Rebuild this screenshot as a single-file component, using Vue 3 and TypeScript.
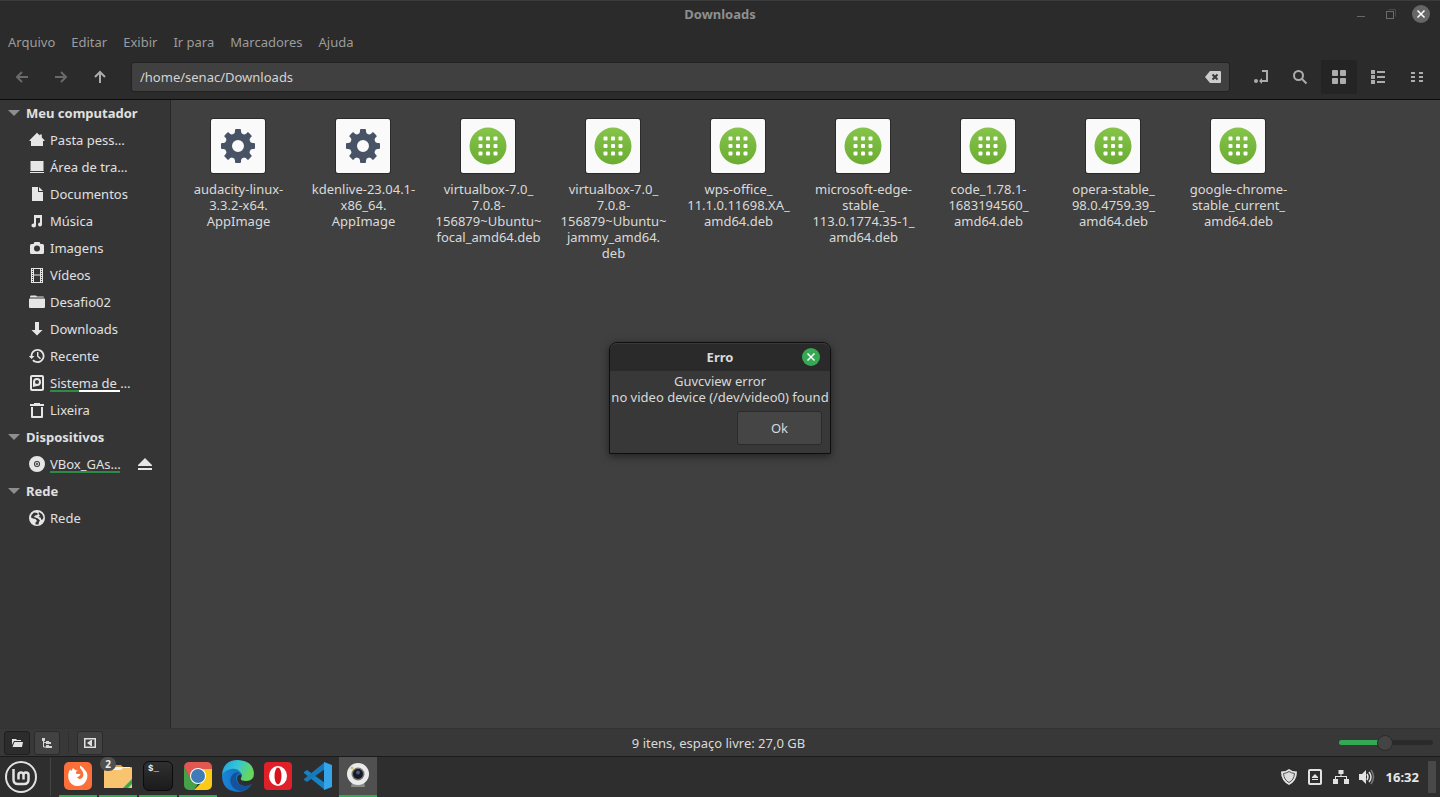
<script setup lang="ts">
import { computed, ref } from 'vue'

interface Place {
  label: string
  icon: string
  usage?: number
  eject?: boolean
}
interface Group {
  title: string
  places: Place[]
}
interface FileItem {
  kind: 'app' | 'deb'
  lines: string[]
}

const menus: string[] = ['Arquivo', 'Editar', 'Exibir', 'Ir para', 'Marcadores', 'Ajuda']

const icons: Record<string, string> = {
  home: 'M8 .8L10.8 3.6V2.6h2v3L15.5 8.2V9H14v5H2V9H.5V8.2Z',
  desktop: 'M1.5 2h13v10h-13ZM1 13h14v1H1Z',
  document: 'M3 1h6v5h5v9H3ZM10 1l4 4h-4Z',
  music: 'M5 2h8v9.500a2 2 0 1 1-2-2V5H7v7.500a2.300 2 0 1 1-2-2Z',
  camera: 'M5.500 2h5l1 2H13.500q1.500 0 1.500 1.500v7q0 1.500-1.500 1.500h-11Q1 14 1 12.500v-7Q1 4 2.500 4h2ZM8 5.500a3 3 0 1 0 0 6a3 3 0 1 0 0-6Z',
  film: 'M2 1h12v15H2ZM5 2v5.500h6V2ZM5 8.500V15h6V8.500ZM3 2v1h1V2ZM3 4v1h1V4ZM3 6v1h1V6ZM3 8v1h1V8ZM3 10v1h1v-1ZM3 12v1h1v-1ZM3 14v1h1v-1ZM12 2v1h1V2ZM12 4v1h1V4ZM12 6v1h1V6ZM12 8v1h1V8ZM12 10v1h1v-1ZM12 12v1h1v-1ZM12 14v1h1v-1Z',
  folder: 'M2 1.500h5l1 1h6q1 0 1 1H1q0-2 1-2ZM1 4.500h14.500q.500 0 .500.500v8q0 1-1 1H1q-1 0-1-1V5.500q0-1 1-1Z',
  download: 'M6 1h4v8h3.500L8 14.500L2.500 9H6Z',
  recent: 'M8.500 1a7 7 0 1 1-5.200 11.700l1.300-1.200a5.200 5.200 0 1 0-1.300-3.500H5.500L2.500 11L-.300 8H1.500A7 7 0 0 1 8.500 1ZM8 4h1.400v3.800l2.600 2.400l-1 1L8 8.500Z',
  disk: 'M3 0h10q2 0 2 2v12q0 2-2 2H3q-2 0-2-2V2Q1 0 3 0ZM3 2v12h10V2ZM8 3a4 4 0 1 1 0 8L4 12V7a4 4 0 0 1 4-4ZM8 5a2 2 0 1 0 0 4a2 2 0 1 0 0-4Z',
  trash: 'M5 1h6v1h4v2H1V2h4ZM2 5h2v9h8V5h2v10q0 1-1 1H3q-1 0-1-1Z',
  disc: 'M8 0a8 8 0 1 1 0 16A8 8 0 1 1 8 0ZM8 5a3 3 0 1 0 0 6a3 3 0 1 0 0-6ZM8 6a2 2 0 1 1 0 4a2 2 0 1 1 0-4ZM8 7a1 1 0 1 0 0 2a1 1 0 1 0 0-2Z',
  globe: 'M8 0a8 8 0 1 1 0 16A8 8 0 1 1 8 0ZM5 2.500L2.500 5L2 7.500l2 1l2.500.500l1.500 2l-1.500 1.500v2l3 .100l.500-2.600l1-1.500L9 8.500L6.500 7.500L5 7l1-1.500L8.500 5V3ZM10 2l-.500 2l1.500 1.500L9.500 7l2 .500l1 2.500l1.500-1L14.500 7L13 4Z',
}

const groups: Group[] = [
  {
    title: 'Meu computador',
    places: [
      { label: 'Pasta pess…', icon: 'home' },
      { label: 'Área de tra…', icon: 'desktop' },
      { label: 'Documentos', icon: 'document' },
      { label: 'Música', icon: 'music' },
      { label: 'Imagens', icon: 'camera' },
      { label: 'Vídeos', icon: 'film' },
      { label: 'Desafio02', icon: 'folder' },
      { label: 'Downloads', icon: 'download' },
      { label: 'Recente', icon: 'recent' },
      { label: 'Sistema de …', icon: 'disk', usage: 41 },
      { label: 'Lixeira', icon: 'trash' },
    ],
  },
  { title: 'Dispositivos', places: [{ label: 'VBox_GAs…', icon: 'disc', usage: 100, eject: true }] },
  { title: 'Rede', places: [{ label: 'Rede', icon: 'globe' }] },
]

const files: FileItem[] = [
  { kind: 'app', lines: ['audacity-linux-', '3.3.2-x64.', 'AppImage'] },
  { kind: 'app', lines: ['kdenlive-23.04.1-', 'x86_64.', 'AppImage'] },
  { kind: 'deb', lines: ['virtualbox-7.0_', '7.0.8-', '156879~Ubuntu~', 'focal_amd64.deb'] },
  { kind: 'deb', lines: ['virtualbox-7.0_', '7.0.8-', '156879~Ubuntu~', 'jammy_amd64.', 'deb'] },
  { kind: 'deb', lines: ['wps-office_', '11.1.0.11698.XA_', 'amd64.deb'] },
  { kind: 'deb', lines: ['microsoft-edge-', 'stable_', '113.0.1774.35-1_', 'amd64.deb'] },
  { kind: 'deb', lines: ['code_1.78.1-', '1683194560_', 'amd64.deb'] },
  { kind: 'deb', lines: ['opera-stable_', '98.0.4759.39_', 'amd64.deb'] },
  { kind: 'deb', lines: ['google-chrome-', 'stable_current_', 'amd64.deb'] },
]

const dots: number[] = [-7.5, 0, 7.5]
const teeth: number[] = [0, 45, 90, 135, 180, 225, 270, 315]
const path = ref('/home/senac/Downloads')
const zoom = ref(49)
const zoomFill = computed(() => ({ '--fill': zoom.value + '%' }))
const dialogOpen = ref(true)
</script>

<template>
  <div class="screen">
    <header class="titlebar">
      <h1>Downloads</h1>
      <div class="window-controls">
        <button aria-label="Minimizar"><svg width="18" height="18"><path d="M5 11.5h8" stroke="#686868" /></svg></button>
        <button aria-label="Restaurar"><svg width="18" height="18" fill="none"><path d="M6.500 4.500h7v7" stroke="#484848" /><rect x="4.500" y="6.500" width="7" height="7" stroke="#6a6a6a" /></svg></button>
        <button aria-label="Fechar"><svg width="18" height="18"><circle cx="9" cy="9" r="9" fill="#666" /><path d="M5.500 5.500l7 7m0-7l-7 7" stroke="#fff" stroke-width="1.500" /></svg></button>
      </div>
    </header>

    <nav class="menubar">
      <button v-for="m in menus" :key="m">{{ m }}</button>
    </nav>

    <div class="toolbar">
      <div class="tools">
        <button class="tool dim" aria-label="Voltar"><svg viewBox="0 0 16 16"><path d="M14 8H3M8 3L3 8l5 5" /></svg></button>
        <button class="tool dim" aria-label="Avançar"><svg viewBox="0 0 16 16"><path d="M2 8h11M8 3l5 5l-5 5" /></svg></button>
        <button class="tool" aria-label="Acima"><svg viewBox="0 0 16 16"><path d="M8 14V3M3 8l5-5l5 5" /></svg></button>
      </div>
      <div class="location">
        <input v-model="path" type="text" aria-label="Local" />
        <button aria-label="Limpar" @click="path = ''">
          <svg width="16" height="16" viewBox="0 0 16 16"><path d="M5 2h10q1 0 1 1v10q0 1-1 1H5L0 8Z" fill="#ccc" /><path d="M7.500 5.500l5 5m0-5l-5 5" stroke="#3a3a3a" stroke-width="2" /></svg>
        </button>
      </div>
      <div class="tools">
        <button class="tool" aria-label="Alternar local"><svg viewBox="0 0 16 16"><path d="M9 2h5v10H8" /><path d="M6 12l3-3v6Z" class="solid" /><circle cx="3" cy="12" r="2" class="solid" /></svg></button>
        <button class="tool" aria-label="Pesquisar"><svg viewBox="0 0 16 16"><circle cx="6.500" cy="6.500" r="4.500" /><path d="M10 10l4.500 4.500" /></svg></button>
        <button class="tool active" aria-label="Ícones"><svg viewBox="0 0 16 16"><g class="solid"><rect x="1" y="1" width="6" height="6" rx="1" /><rect x="9" y="1" width="6" height="6" rx="1" /><rect x="1" y="9" width="6" height="6" rx="1" /><rect x="9" y="9" width="6" height="6" rx="1" /></g></svg></button>
        <button class="tool" aria-label="Lista"><svg viewBox="0 0 16 16"><path class="solid" d="M1 1h4v4H1ZM1 6h4v4H1ZM1 11h4v4H1ZM7 2h8v2H7ZM7 7h8v2H7ZM7 12h8v2H7Z" /></svg></button>
        <button class="tool" aria-label="Compacto"><svg viewBox="0 0 16 16"><path class="solid" d="M2 3h4v2H2ZM2 7h4v2H2ZM2 11h4v2H2ZM10 3h4v2h-4ZM10 7h4v2h-4ZM10 11h4v2h-4Z" /></svg></button>
      </div>
    </div>

    <main class="content">
      <aside class="sidebar">
        <section v-for="g in groups" :key="g.title">
          <h2><svg width="12" height="6"><path d="M0 0h12L6 6Z" fill="#8e8e8e" /></svg>{{ g.title }}</h2>
          <div v-for="p in g.places" :key="p.label" class="place">
            <a href="#" @click.prevent>
              <svg width="16" height="16" viewBox="0 0 16 16"><path :d="icons[p.icon]" fill="#e6e6e6" fill-rule="evenodd" /></svg>
              <span>{{ p.label }}<i v-if="p.usage" class="usage"><b :style="{ width: p.usage + '%' }"></b></i></span>
            </a>
            <button v-if="p.eject" aria-label="Ejetar"><svg width="16" height="16"><path d="M8 2l7 7v1H1V9ZM1 12h14v2H1Z" fill="#e6e6e6" /></svg></button>
          </div>
        </section>
      </aside>

      <ul class="files">
        <li v-for="f in files" :key="f.lines.join('')">
          <svg class="thumb" viewBox="0 0 56 56">
            <rect x="0" y="0" width="56" height="56" rx="3" fill="#2b2b2b" />
            <rect x="1" y="1" width="54" height="54" rx="2" fill="#fafafa" />
            <g v-if="f.kind === 'app'" fill="#485366">
              <path v-for="a in teeth" :key="a" d="M23.500 18L25 13.500V12q0-1 1-1h4q1 0 1 1v1.500L32.500 18Z" :transform="`rotate(${a} 28 28)`" />
              <circle cx="28" cy="28" r="9.500" fill="none" stroke="#485366" stroke-width="7" />
            </g>
            <g v-else>
              <defs><linearGradient id="leaf" x2="0" y2="1"><stop stop-color="#86c44a" /><stop offset="1" stop-color="#6aac31" /></linearGradient></defs>
              <circle cx="28" cy="28" r="18.500" fill="url(#leaf)" />
              <template v-for="y in dots" :key="y">
                <rect v-for="x in dots" :key="x" :x="26 + x" :y="26 + y" width="4" height="4" rx="1" fill="#fff" />
              </template>
            </g>
          </svg>
          <p><span v-for="line in f.lines" :key="line">{{ line }}</span></p>
        </li>
      </ul>
    </main>

    <footer class="statusbar">
      <div class="pane-buttons">
        <button class="pressed" aria-label="Locais"><svg width="12" height="12"><path d="M1 2h4l1 1h4v1H3L1 8ZM3.500 5H12l-1 5H1.500Z" fill="#e4e4e4" /></svg></button>
        <button aria-label="Árvore"><svg width="12" height="12"><path d="M2.500 2v8H5M2.500 5.500H5" fill="none" stroke="#d4d4d4" /><path d="M1 1h3v3H1ZM5 4h3v1h2v2H5ZM5 8h3v1h3v2H5Z" fill="#d4d4d4" /></svg></button>
        <span class="rule"></span>
        <button aria-label="Ocultar painel"><svg width="12" height="12"><path d="M0 1h12v10H0ZM1.500 2.500v7h9v-7ZM7 3v6L3 6ZM7 3h1v6H7Z" fill="#e0e0e0" fill-rule="evenodd" /></svg></button>
      </div>
      <p>9 itens, espaço livre: 27,0 GB</p>
      <div class="zoom"><input v-model="zoom" type="range" min="0" max="100" aria-label="Zoom" :style="zoomFill" /></div>
    </footer>

    <footer class="panel">
      <button class="start" aria-label="Menu">
        <svg width="34" height="34" viewBox="0 0 34 34" fill="none" stroke="#e2e2e2"><circle cx="17" cy="17" r="15" stroke-width="2" /><path d="M9.500 9v10.500q0 4.500 4.500 4.500h6q4.500 0 4.500-4.500V15q0-2.500-2.500-2.500T19.500 15v4.500M19.500 15q0-2.500-2.500-2.500T14.500 15v4.500" stroke-width="2.500" /></svg>
      </button>
      <span class="divider"></span>
      <div class="tasks">
        <button class="task running" aria-label="Firefox">
          <svg viewBox="0 0 32 32"><rect x="2" y="2" width="28" height="28" rx="5" fill="#fd6f39" /><path d="M8 9.500L9.500 11l1.500-3l3 2.500l2-.500q-3 2-1.500 4h4q-1 3-3.500 3q2 3.500 5 1q2-2 1-5.500q-1-3-3-4.500V5.500q3 1.500 4.500 4q4 4 2.500 9A9.500 9.500 0 0 1 6.500 19Q5.500 13 8 9.500Z" fill="#fff" /></svg>
        </button>
        <button class="task running" aria-label="Arquivos">
          <svg viewBox="0 0 32 32"><path d="M2 5h17l2 2h9v6H2Z" fill="#d89b4b" /><path d="M3 7h25v5H3Z" fill="#f2f2f2" /><path d="M2 10h17l2-2h9v20H2Z" fill="#f9c470" /><path d="M21 28l9-9v5l-4 4Z" fill="#35a854" /></svg>
          <span class="badge">2</span>
        </button>
        <button class="task running" aria-label="Terminal">
          <span class="terminal">$<i>_</i></span>
        </button>
        <button class="task running" aria-label="Chrome">
          <svg viewBox="0 0 32 32"><defs><clipPath id="tile"><rect x="2" y="2" width="28" height="28" rx="5" /></clipPath></defs><g clip-path="url(#tile)"><path d="M2 2h28v7H16l-7 11L2 7Z" fill="#e2574f" /><path d="M2 7l7 12l7 5l-4 6H2Z" fill="#45a048" /><path d="M16 9h14v21H12l10-10Z" fill="#fbc917" /></g><circle cx="16" cy="16" r="8" fill="#fff" /><circle cx="16" cy="16" r="7" fill="#3e7bb8" /></svg>
        </button>
        <button class="task" aria-label="Edge">
          <svg viewBox="0 0 32 32"><defs><linearGradient id="sea" x2="1" y2=".3"><stop stop-color="#219fe0" /><stop offset=".5" stop-color="#35c5d6" /><stop offset="1" stop-color="#67d85a" /></linearGradient><linearGradient id="deep" x2="1"><stop stop-color="#1a86d9" /><stop offset="1" stop-color="#135fae" /></linearGradient></defs><path d="M0 15Q3 8 11 8q8 0 8 7q-3-1-4 3q0 7 8 8q4 0 7-2q-5 8-14 8Q0 31 0 15Z" fill="url(#deep)" /><path d="M11 14q-5 6-1 12q4 5 10 5q7-2 10-7q-5 3-10 1.500q-7-3-6-9q1-3 4-3.500q-3-2-7 1Z" fill="#14529c" /><path d="M0 15Q1 0 16 0q15 1 16 13q0 8-8 8q-6 0-5-3q2-3-1-6q-3-4-9-3q-6 1-9 6Z" fill="url(#sea)" /></svg>
        </button>
        <button class="task" aria-label="Opera">
          <svg viewBox="0 0 32 32"><rect x="2" y="2" width="28" height="28" rx="4" fill="#df2028" /><ellipse cx="16" cy="16" rx="9" ry="10" fill="#fff" /><ellipse cx="16" cy="16" rx="3.500" ry="8.500" fill="#d7141e" /></svg>
        </button>
        <button class="task" aria-label="Code">
          <svg viewBox="0 0 32 32"><path d="M2 12l3-2l18 13v7L2 13Z" fill="#1683c6" /><path d="M2 20l3 2L23 9V2L2 19Z" fill="#1878b8" /><path d="M22 2l8 3v22l-8 3Z" fill="#34a4eb" /></svg>
        </button>
        <button class="task running current" aria-label="Guvcview">
          <svg viewBox="0 0 32 32"><ellipse cx="16" cy="27" rx="10" ry="3" fill="#51514d" /><path d="M10 22h12l1 5H9Z" fill="#8a8a86" /><circle cx="16" cy="14" r="11" fill="#ecebec" /><circle cx="16" cy="14" r="6.500" fill="#77777a" /><circle cx="16" cy="14" r="5" fill="#181b23" /><circle cx="16" cy="12.500" r="2" fill="#485b85" /><circle cx="10" cy="8" r="1" fill="#f4ed62" stroke="#c8c23b" /></svg>
        </button>
      </div>
      <div class="tray">
        <button aria-label="Atualizações"><svg width="16" height="16"><path d="M8 0q3 2.500 8 2.500Q16 12 8 16Q0 12 0 2.500Q5 2.500 8 0Z" fill="#e2e2e2" /><path d="M8 2.500q2 1.500 5.500 2Q13 11 8 13.500Q3 11 2.500 4.500Q6 4 8 2.500Z" fill="#ddd" stroke="#555" /></svg></button>
        <button aria-label="Unidades"><svg width="16" height="16"><path d="M3 0h10q2 0 2 2v12q0 2-2 2H3q-2 0-2-2V2Q1 0 3 0ZM3 2v12h10V2ZM8 5l3 3v1H5V8ZM5 10h6v1H5Z" fill="#e2e2e2" fill-rule="evenodd" /></svg></button>
        <button aria-label="Rede"><svg width="16" height="16"><path d="M5.500 1h5v4h-2v2H14v3h2v5h-5v-5h2V8H3v2h2v5H0v-5h2V7h5.500V5h-2Z" fill="#e2e2e2" /></svg></button>
        <button aria-label="Volume"><svg width="16" height="16" fill="none" stroke="#e2e2e2" stroke-width="1.500"><path d="M0 5h3l4-4v14l-4-4H0Z" fill="#e2e2e2" stroke="none" /><path d="M8 5q2 3 0 6M10 3q4 5 0 10" /><path d="M12 1q5 7 0 14" stroke="#777" /></svg></button>
      </div>
      <time>16:32</time>
      <button class="peek" aria-label="Mostrar área de trabalho"></button>
    </footer>

    <div v-if="dialogOpen" class="overlay">
      <section class="dialog" role="alertdialog" aria-labelledby="error-title">
        <header>
          <h2 id="error-title">Erro</h2>
          <button aria-label="Fechar erro" @click="dialogOpen = false"><svg width="18" height="18"><circle cx="9" cy="9" r="9" fill="#35a854" /><path d="M5.500 5.500l7 7m0-7l-7 7" stroke="#fff" stroke-width="1.500" /></svg></button>
        </header>
        <p>Guvcview error<br />no video device (/dev/video0) found</p>
        <button class="ok" @click="dialogOpen = false">Ok</button>
      </section>
    </div>
  </div>
</template>

<style>
body {
  margin: 0;
  background: #2e2e2e;
}
</style>

<style scoped>
.screen {
  position: relative;
  display: flex;
  flex-direction: column;
  min-height: 100vh;
  box-sizing: border-box;
  border-top: 1px solid #3b3b3b;
  background: #2b2b2b;
  color: #dadada;
  font: 13px/16px "Noto Sans", "Open Sans", sans-serif;
}
.screen * {
  box-sizing: border-box;
}
button {
  padding: 0;
  border: 0;
  background: none;
  color: inherit;
  font: inherit;
}
svg {
  display: block;
}
h1,
h2,
p,
ul {
  margin: 0;
  padding: 0;
  font-size: 13px;
}
.titlebar {
  display: grid;
  grid-template-columns: 1fr auto 1fr;
  align-items: center;
  height: 27px;
  padding: 0 10px 2px;
}
.titlebar h1 {
  grid-column: 2;
  color: #8f8f8f;
}
.window-controls {
  display: flex;
  justify-content: flex-end;
  gap: 12px;
}
.menubar {
  display: flex;
  align-items: center;
  gap: 16px;
  height: 28px;
  padding: 0 8px;
  color: #9c9c9c;
}
.toolbar {
  display: flex;
  align-items: center;
  gap: 13px;
  height: 44px;
  padding: 0 5px 2px 4px;
  border-bottom: 1px solid #0c0c0c;
}
.tools {
  display: flex;
  gap: 3px;
}
.tool {
  display: grid;
  place-items: center;
  width: 36px;
  height: 34px;
  border-radius: 3px;
  color: #acacac;
}
.tool.dim {
  color: #6a6a6a;
}
.tool.active {
  background: #242424;
}
.tool svg {
  width: 16px;
  height: 16px;
  fill: none;
  stroke: currentColor;
  stroke-width: 2;
}
.tool .solid {
  fill: currentColor;
  stroke: none;
}
.location {
  display: flex;
  flex: 1;
  align-items: center;
  height: 30px;
  padding-right: 8px;
  border: 1px solid #222;
  border-radius: 3px;
  background: #404040;
}
.location input {
  flex: 1;
  min-width: 0;
  padding: 0 8px;
  border: 0;
  outline: 0;
  background: none;
  color: #d4d4d4;
  font: inherit;
}
.content {
  display: flex;
  flex: 1;
  background: #404040;
}
.sidebar {
  width: 171px;
  border-right: 1px solid #272727;
  background: #353535;
  color: #e0e0e0;
}
.sidebar h2 {
  display: flex;
  align-items: center;
  gap: 6px;
  height: 27px;
  padding: 0 0 2px 8px;
}
.place {
  display: flex;
  align-items: center;
  height: 27px;
  padding: 0 0 2px 29px;
}
.place a {
  display: flex;
  align-items: center;
  gap: 5px;
  width: 108px;
  color: inherit;
  text-decoration: none;
  white-space: nowrap;
}
.place span {
  position: relative;
}
.usage {
  position: absolute;
  left: 0;
  bottom: -1px;
  width: 70px;
  height: 2px;
  background: #fff;
}
.usage b {
  display: block;
  height: 2px;
  background: #2d8a47;
}
.files {
  display: flex;
  flex: 1;
  flex-wrap: wrap;
  align-content: flex-start;
  padding: 18px 5px;
  list-style: none;
}
.files li {
  width: 125px;
}
.thumb {
  width: 56px;
  height: 56px;
  margin: 0 34px 7px;
}
.files p {
  text-align: center;
}
.files p span {
  display: block;
}
.statusbar {
  display: grid;
  grid-template-columns: 1fr auto 1fr;
  align-items: center;
  height: 29px;
  padding: 0 7px 0 4px;
  border-top: 1px solid #333;
  border-bottom: 1px solid #1b1b1b;
  background: #383838;
}
.pane-buttons {
  display: flex;
  gap: 4px;
}
.pane-buttons button {
  display: grid;
  place-items: center;
  width: 26px;
  height: 24px;
  border: 1px solid #2b2b2b;
  border-radius: 3px;
  background: #424242;
}
.pane-buttons .pressed {
  border-color: #1e1e1e;
  background: #2c2c2c;
}
.rule {
  width: 1px;
  margin: 0 4px;
  background: #303030;
}
.zoom {
  display: flex;
  justify-content: flex-end;
}
.zoom input {
  appearance: none;
  width: 94px;
  height: 16px;
  margin: 0;
  background: none;
}
.zoom input::-webkit-slider-runnable-track {
  height: 5px;
  border-radius: 3px;
  background: linear-gradient(to right, #35a854 var(--fill), #2a2a2a var(--fill));
}
.zoom input::-webkit-slider-thumb {
  appearance: none;
  width: 16px;
  height: 16px;
  margin-top: -5px;
  border: 1px solid #2a2a2a;
  border-radius: 50%;
  background: #444;
}
.panel {
  display: flex;
  align-items: center;
  height: 40px;
  padding-right: 4px;
  background: #2e2e2e;
}
.start {
  padding: 0 12px 0 4px;
}
.divider {
  width: 1px;
  height: 38px;
  margin-right: 8px;
  background: #454545;
}
.tasks {
  display: flex;
  flex: 1;
  gap: 2px;
}
.task {
  position: relative;
  display: grid;
  place-items: center;
  width: 38px;
  height: 40px;
  border-bottom: 2px solid transparent;
}
.task.running {
  border-color: #35a854;
}
.task.current {
  background: #505050;
}
.task svg {
  width: 32px;
  height: 32px;
}
.badge {
  position: absolute;
  top: 0;
  left: 1px;
  width: 16px;
  height: 14px;
  border-radius: 8px;
  background: #505050;
  color: #eee;
  font-size: 10px;
  font-weight: bold;
  line-height: 14px;
}
.terminal {
  display: block;
  width: 30px;
  height: 30px;
  padding: 2px 4px;
  border: 1px solid #0b0b0b;
  border-radius: 6px;
  background: linear-gradient(#303030, #1b1b1b);
  color: #eee;
  font: bold 9px/10px "Liberation Mono", monospace;
  text-align: left;
}
.terminal i {
  font-style: normal;
}
.tray {
  display: flex;
  gap: 10px;
}
time {
  margin: 0 9px 0 11px;
  color: #e6e6e6;
  font-weight: bold;
}
.peek {
  width: 8px;
  height: 32px;
  background: #484848;
}
.overlay {
  position: absolute;
  inset: 0 0 2px;
  display: grid;
  place-items: center;
}
.dialog {
  display: flex;
  flex-direction: column;
  width: 222px;
  border: 1px solid #0e0e0e;
  border-radius: 8px 8px 0 0;
  background: #383838;
  box-shadow: 0 2px 8px rgb(0 0 0 / 50%);
}
.dialog header {
  display: grid;
  grid-template-columns: 1fr auto 1fr;
  align-items: center;
  height: 28px;
  padding: 0 10px 1px;
  border-top: 1px solid #3a3a3a;
  border-radius: 7px 7px 0 0;
  background: #2a2a2a;
}
.dialog header h2 {
  grid-column: 2;
}
.dialog header button {
  justify-self: end;
}
.dialog p {
  padding: 2px 0 6px;
  text-align: center;
  white-space: nowrap;
}
.ok {
  align-self: flex-end;
  width: 85px;
  height: 34px;
  margin: 0 8px 8px;
  border: 1px solid #2b2b2b;
  border-radius: 3px;
  background: #454545;
}
</style>
